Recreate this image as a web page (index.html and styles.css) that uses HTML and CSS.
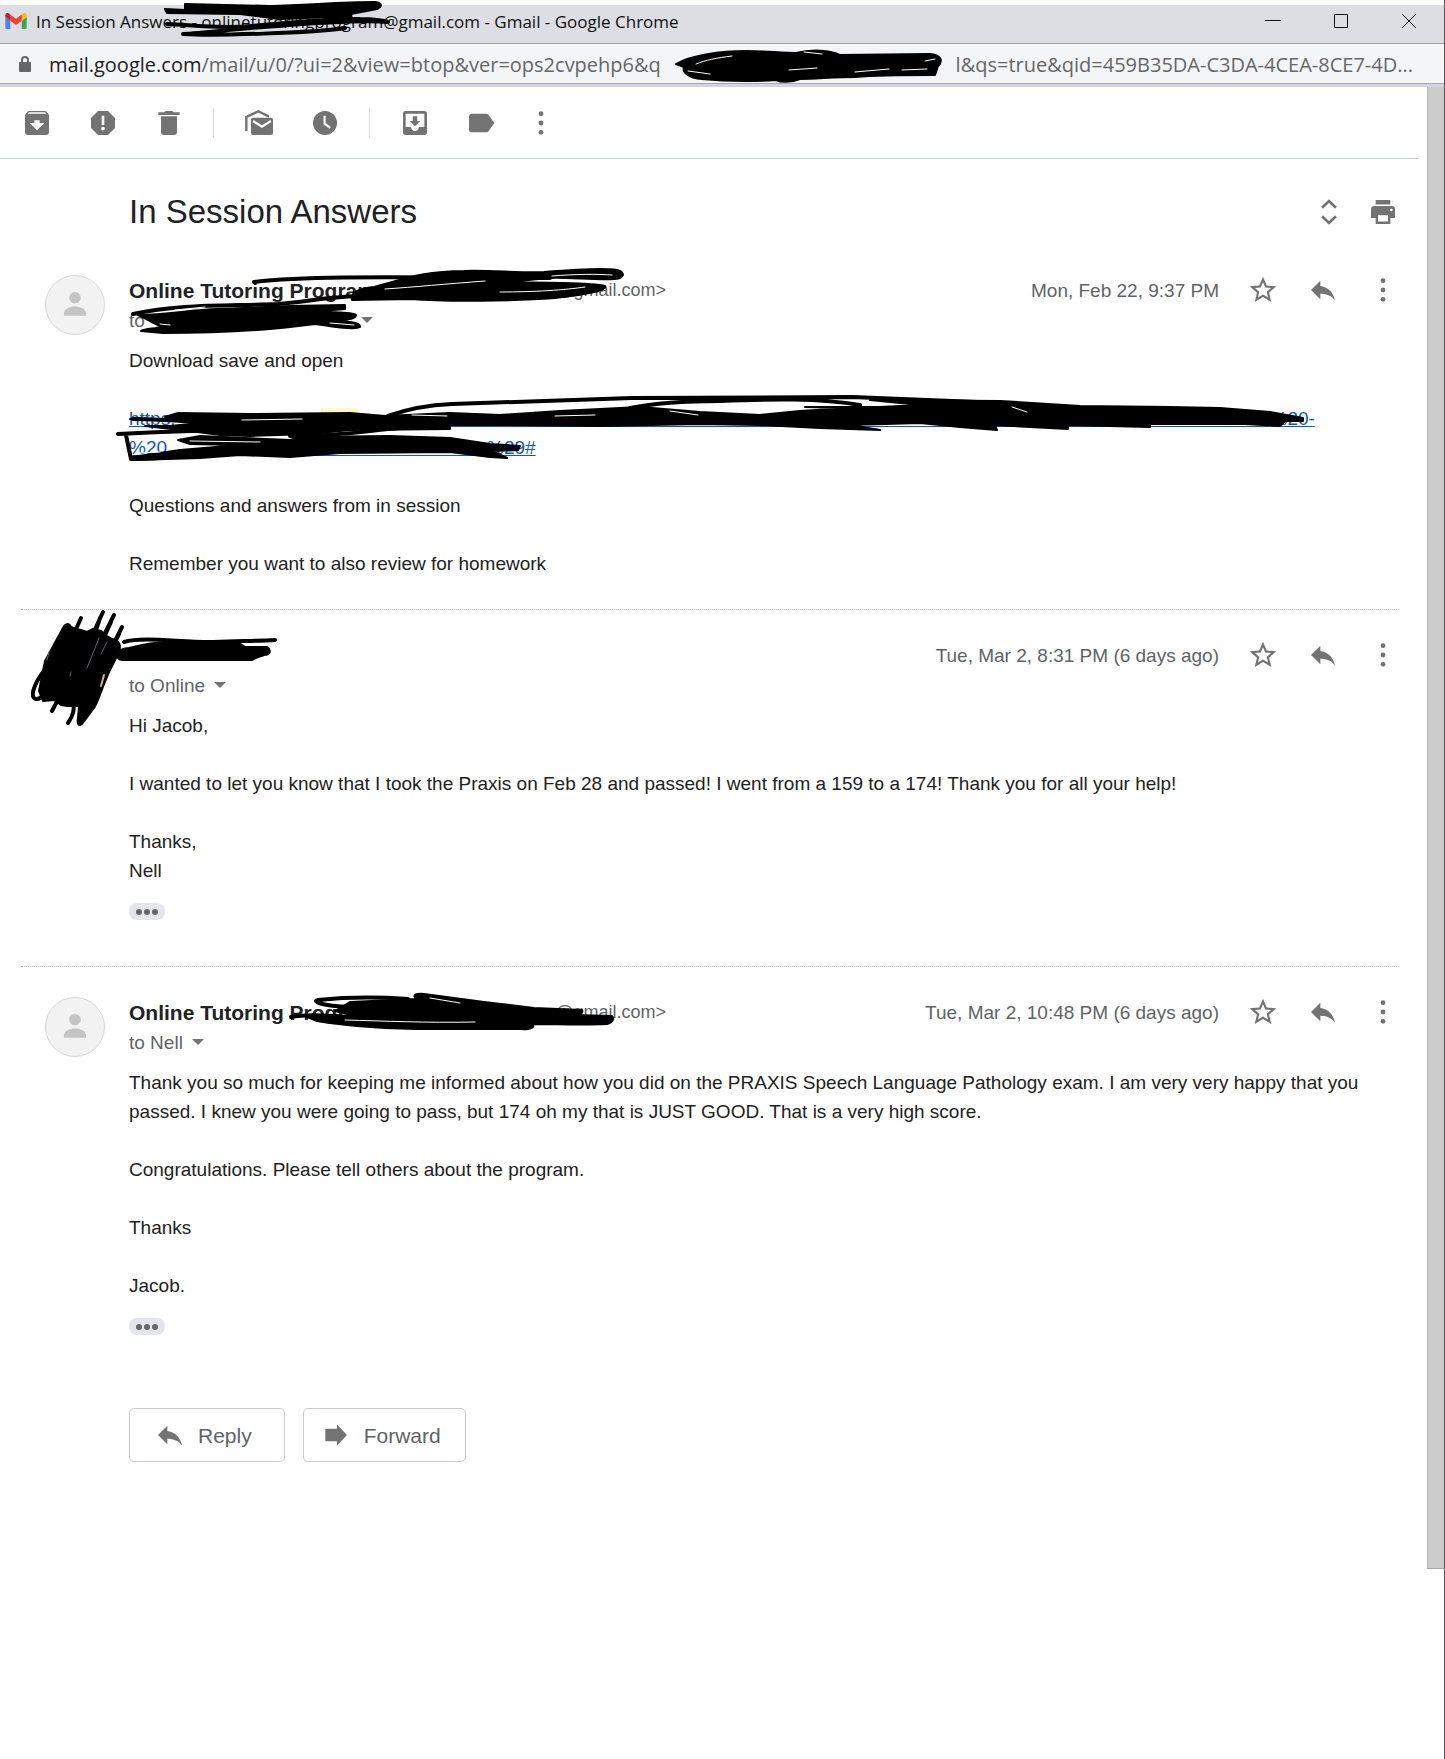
FILE: index.html
```html
<!DOCTYPE html>
<html lang="en">
<head>
    <meta charset="UTF-8">
    <meta name="viewport" content="width=device-width, initial-scale=1.0">
    <title>In Session Answers - Gmail</title>
    <link rel="stylesheet" href="styles.css">
</head>
<body>
    <!-- Icon set -->
    <svg class="icon-set" aria-hidden="true">
        <symbol id="i-archive" viewBox="0 0 24 24"><path d="M20.54 5.23l-1.39-1.68C18.88 3.21 18.47 3 18 3H6c-.47 0-.88.21-1.16.55L3.46 5.23C3.17 5.57 3 6.02 3 6.5V19c0 1.1.9 2 2 2h14c1.1 0 2-.9 2-2V6.5c0-.48-.17-.93-.46-1.27zM12 17.5L6.5 12H10v-2h4v2h3.5L12 17.5zM5.12 5l.81-1h12l.94 1H5.12z"/></symbol>
        <symbol id="i-spam" viewBox="0 0 24 24"><path d="M15.73 3H8.27L3 8.27v7.46L8.27 21h7.46L21 15.73V8.27L15.73 3zM12 17.6c-.8 0-1.4-.6-1.4-1.4s.6-1.4 1.4-1.4 1.4.6 1.4 1.4-.6 1.4-1.4 1.4zm1-4.1h-2V6.5h2v7z"/></symbol>
        <symbol id="i-delete" viewBox="0 0 24 24"><path d="M6 19c0 1.1.9 2 2 2h8c1.1 0 2-.9 2-2V7H6v12zM20 4h-4.5l-1-1h-5l-1 1H4v2h16V4z"/></symbol>
        <symbol id="i-unread" viewBox="0 0 24 24"><path d="M2.5 18V7.5L11.5 3.2l8 4" fill="none" stroke="currentColor" stroke-width="1.8"/><path d="M7.5 8H21a1.5 1.5 0 0 1 1.5 1.5v10A1.5 1.5 0 0 1 21 21H7.5A1.5 1.5 0 0 1 6 19.5v-10A1.5 1.5 0 0 1 7.5 8z"/><path d="M7.5 10.5l6.7 4.2 6.7-4.2" fill="none" stroke="#fff" stroke-width="1.7"/></symbol>
        <symbol id="i-snooze" viewBox="0 0 24 24"><circle cx="12" cy="12" r="9"/><path d="M11.7 6.5v6l4.2 3.2" fill="none" stroke="#fff" stroke-width="1.6"/></symbol>
        <symbol id="i-move" viewBox="0 0 24 24"><path d="M19 3H5a2 2 0 0 0-2 2v14a2 2 0 0 0 2 2h14a2 2 0 0 0 2-2V5a2 2 0 0 0-2-2zm0 12h-4c0 1.66-1.35 3-3 3s-3-1.34-3-3H5V5h14v10zM16 10.5h-2.3V7h-3.4v3.5H8l4 4 4-4z"/></symbol>
        <symbol id="i-label" viewBox="0 0 24 24"><path d="M17.63 5.84C17.27 5.33 16.67 5 16 5H5c-1.1 0-2 .9-2 2v10c0 1.1.9 2 2 2h11c.67 0 1.27-.33 1.63-.84L22 12l-4.37-6.16z"/></symbol>
        <symbol id="i-more" viewBox="0 0 24 24"><circle cx="12" cy="5" r="1.8"/><circle cx="12" cy="12" r="1.8"/><circle cx="12" cy="19" r="1.8"/></symbol>
        <symbol id="i-expand" viewBox="0 0 24 24"><path d="M6.8 8.8L12 3.8l5.2 5M6.8 15.2l5.2 5 5.2-5" fill="none" stroke="currentColor" stroke-width="2"/></symbol>
        <symbol id="i-print" viewBox="0 0 24 24"><path d="M6.5 3h11v3.3h-11zM18.5 7.5h-13A2.5 2.5 0 0 0 3 10v6.5h3.5V21h11v-4.5H21V10a2.5 2.5 0 0 0-2.5-2.5zM15.7 19.2H8.3v-4.7h7.4v4.7zm2.5-7.7a1 1 0 1 1 0-2 1 1 0 0 1 0 2z"/></symbol>
        <symbol id="i-star" viewBox="0 0 24 24"><path d="M22 9.24l-7.19-.62L12 2 9.19 8.63 2 9.24l5.46 4.73L5.82 21 12 17.27 18.18 21l-1.63-7.03L22 9.24zM12 15.4l-3.76 2.27 1-4.28-3.32-2.88 4.38-.38L12 6.1l1.71 4.04 4.38.38-3.32 2.88 1 4.28L12 15.4z"/></symbol>
        <symbol id="i-reply" viewBox="0 0 24 24"><path d="M10 9V5l-7 7 7 7v-4.1c5 0 8.5 1.6 11 5.1-1-5-4-10-11-11z"/></symbol>
        <symbol id="i-forward" viewBox="0 0 24 24"><path d="M4 7.3h8.7V4l7.5 8-7.5 8v-3.3H4z"/></symbol>
        <symbol id="i-person" viewBox="0 0 60 60"><circle cx="30" cy="22.5" r="6"/><path d="M18.5 41v-2c0-5 6-7.5 11.5-7.5S41.5 34 41.5 39v2z"/></symbol>
        <symbol id="i-lock" viewBox="0 0 14 18"><path d="M4 8V5a3 3 0 0 1 6 0v3" fill="none" stroke="currentColor" stroke-width="2"/><rect x="1" y="7" width="12" height="10" rx="1"/></symbol>
    </svg>

    <div class="window">
        <header class="title-bar">
            <svg class="gmail-logo" viewBox="0 0 24 18" aria-hidden="true">
                <path d="M1.6 18H5.5V8.7L0 4.6v11.8C0 17.3.7 18 1.6 18z" fill="#4285f4"/>
                <path d="M18.5 18h3.9c.9 0 1.6-.7 1.6-1.6V4.6l-5.5 4.1z" fill="#34a853"/>
                <path d="M18.5 1.6v7.1L24 4.6V2.4c0-2-2.3-3.2-3.9-2z" fill="#fbbc04"/>
                <path d="M5.5 8.7V1.6L12 6.5l6.5-4.9v7.1L12 13.6z" fill="#ea4335"/>
                <path d="M0 2.4v2.2l5.5 4.1V1.6L3.9.4C2.3-.8 0 .4 0 2.4z" fill="#c5221f"/>
            </svg>
            <span class="window-title">In Session Answers - onlinetutoringprogram@gmail.com - Gmail - Google Chrome</span>
            <div class="window-controls">
                <button type="button" aria-label="Minimize"><svg viewBox="0 0 16 16"><path d="M0 7.5h16"/></svg></button>
                <button type="button" aria-label="Maximize"><svg viewBox="0 0 16 16"><path d="M1.5 1.5h13v13h-13z"/></svg></button>
                <button type="button" aria-label="Close"><svg viewBox="0 0 16 16"><path d="M1 1l14 14M15 1L1 15"/></svg></button>
            </div>
            <svg class="ink ink-title" viewBox="160 0 240 40" aria-hidden="true">
                <path class="fill" d="M165 9l20 1V4l85 2c40-1 70-4 105-4 8 1 7 5 2 7l-26 5 1 7-22-4-50 2-40-5-73-1z"/>
                <path d="M167 24c25 1 50 5 85 2 40-4 80-8 108-7 15 0 26 2 28 3-25-2-60 0-110 4-40 2-70 7-95 8 30 2 130-1 162-6"/>
            </svg>
        </header>

        <div class="address-bar">
            <svg class="lock" aria-hidden="true"><use href="#i-lock"/></svg>
            <span class="url"><b>mail.google.com</b>/mail/u/0/?ui=2&amp;view=btop&amp;ver=ops2cvpehp6&amp;q</span>
            <span class="url url-end">l&amp;qs=true&amp;qid=459B35DA-C3DA-4CEA-8CE7-4D...</span>
            <svg class="ink ink-url" viewBox="670 46 280 38" aria-hidden="true">
                <path class="fill" d="M676 64c15-9 45-13 70-13 20 0 35 2 50 2 15-4 35-3 44 2l90-1c10 1 14 6 8 12l-3 9c-25 0-55 0-80 2-20 0-40 2-55 2-10 4-20 3-24 1-30 2-55 1-74-1-14-1-20-7-18-12z"/>
                <path class="gap" d="M696 64c10-4 20-6 36-8M688 71l22 3M789 70l28-2M855 72l34-3M902 70l25-1M925 61l10-2M804 52l18 2"/>
            </svg>
        </div>

        <div class="page">
            <main class="mail">
                <nav class="toolbar" aria-label="Message actions">
                    <button type="button" class="icon-btn" aria-label="Archive"><svg><use href="#i-archive"/></svg></button>
                    <button type="button" class="icon-btn" aria-label="Report spam"><svg><use href="#i-spam"/></svg></button>
                    <button type="button" class="icon-btn" aria-label="Delete"><svg><use href="#i-delete"/></svg></button>
                    <span class="separator"></span>
                    <button type="button" class="icon-btn" aria-label="Mark as unread"><svg><use href="#i-unread"/></svg></button>
                    <button type="button" class="icon-btn" aria-label="Snooze"><svg><use href="#i-snooze"/></svg></button>
                    <span class="separator"></span>
                    <button type="button" class="icon-btn" aria-label="Move to"><svg><use href="#i-move"/></svg></button>
                    <button type="button" class="icon-btn" aria-label="Labels"><svg><use href="#i-label"/></svg></button>
                    <button type="button" class="icon-btn narrow" aria-label="More"><svg viewBox="6 0 12 24"><use href="#i-more" width="24" height="24"/></svg></button>
                </nav>

                <div class="subject">
                    <h1>In Session Answers</h1>
                    <button type="button" class="icon-btn" aria-label="Expand all"><svg><use href="#i-expand"/></svg></button>
                    <button type="button" class="icon-btn" aria-label="Print all"><svg><use href="#i-print"/></svg></button>
                </div>

                <!-- Message 1 -->
                <article class="message">
                    <svg class="avatar" aria-hidden="true"><use href="#i-person"/></svg>
                    <div class="content">
                        <div class="message-head">
                            <strong class="sender">Online Tutoring Program</strong>
                            <span class="address">@gmail.com&gt;</span>
                            <span class="date">Mon, Feb 22, 9:37 PM</span>
                            <button type="button" class="icon-btn" aria-label="Star"><svg><use href="#i-star"/></svg></button>
                            <button type="button" class="icon-btn" aria-label="Reply"><svg><use href="#i-reply"/></svg></button>
                            <button type="button" class="icon-btn" aria-label="More"><svg><use href="#i-more"/></svg></button>
                        </div>
                        <div class="recipient">
                            <span class="hidden-names">to</span>
                            <button type="button" class="caret" aria-label="Show details"></button>
                        </div>
                        <div class="text">
                            <p>Download save and open</p>
                            <p>
                                <a href="#">https:<span class="hidden-url"></span>%20-<br>%20<span class="hidden-url short"></span>%29#</a>
                            </p>
                            <p>Questions and answers from in session</p>
                            <p>Remember you want to also review for homework</p>
                        </div>
                        <svg class="ink ink-sender" viewBox="126 266 504 68" aria-hidden="true">
                            <path d="M254 282c50-6 120-5 296-4"/>
                            <path class="fill" d="M352 300c-2-7 5-11 22-13 30-8 50-16 90-16 25-1 55 2 80 1 25-2 70-5 76-1 6 3 2 8-6 8-18 1-50-2-65-1l-50 5c40-1 95 0 106 3 4 5-30 10-50 12-40 3-110 4-142 1z"/>
                            <path class="gap" d="M552 276c25-2 45-2 60-1M385 289c30-2 60-5 100-8M500 292c35 0 65-2 85-5"/>
                            <path d="M133 314c45-10 90-8 145-10 25-2 50-7 80-8"/>
                            <path class="fill" d="M138 315c30 0 50-5 80-6l72-3 55-1v4l-35 3c20 0 45 0 46 3-1 6-15 4-25 6 15 0 30 1 29 6-5 3-25 0-45-3-50 7-100 9-152 9l-22-2c5-3 18-2 20-5-8-2-13-7-23-11z"/>
                            <path class="gap" d="M160 324l10 1M175 310l30-3M330 323l24 2"/>
                        </svg>
                        <svg class="ink ink-link" viewBox="114 394 1196 68" aria-hidden="true">
                            <path d="M321 408h37v5h-37z" class="highlight"/>
                            <path d="M388 416c22-8 40-11 64-12l180-6 220-1 150 6M630 408c30-6 60-7 90-7 50-2 100-3 140 4"/>
                            <path class="fill" d="M165 417L178 413 250 414 350 413 385 416 450 413 500 415 560 411 640 407 700 412 760 415 800 411 850 408 805 407 880 407 920 405 870 400 1000 401 1080 406 1170 407 1220 408 1270 412 1303 418 1303 421 1285 421 1280 426 1245 424 1150 424 1150 427 1068 425 1068 429 995 425 997 430 960 427 920 423 850 425 880 430 820 428 760 425 700 424 600 426 500 425 450 425 450 429 350 430 310 434 250 436 220 435 190 431 145 426 170 426 210 422 130 419 200 420z"/>
                            <path class="gap" d="M412 415l35 1M242 420l60-1M670 411l28 4M1012 407l15 5M555 416l40-1"/>
                            <path d="M118 434c60-3 110-5 180-4M133 419c40 1 60 2 90 5M126 435l5 24c60-1 100-8 150-12M290 436c60 0 80-6 110-8"/>
                            <path class="fill" d="M178 440L200 436 290 440 300 437 390 436 450 438 490 444 520 446 518 450 492 451 507 458 490 457 450 452 340 453 290 457 240 455 200 458 132 460 132 457 180 450 240 445 190 444z"/>
                            <path class="gap" d="M190 441l70 1M140 453l20-1"/>
                        </svg>
                    </div>
                </article>

                <!-- Message 2 -->
                <article class="message">
                    <span class="avatar photo"></span>
                    <div class="content">
                        <div class="message-head">
                            <span class="date">Tue, Mar 2, 8:31 PM (6 days ago)</span>
                            <button type="button" class="icon-btn" aria-label="Star"><svg><use href="#i-star"/></svg></button>
                            <button type="button" class="icon-btn" aria-label="Reply"><svg><use href="#i-reply"/></svg></button>
                            <button type="button" class="icon-btn" aria-label="More"><svg><use href="#i-more"/></svg></button>
                        </div>
                        <div class="recipient">
                            <span>to Online</span>
                            <button type="button" class="caret" aria-label="Show details"></button>
                        </div>
                        <div class="text">
                            <p>Hi Jacob,</p>
                            <p>I wanted to let you know that I took the Praxis on Feb 28 and passed! I went from a 159 to a 174! Thank you for all your help!</p>
                            <p>Thanks,<br>Nell</p>
                        </div>
                        <button type="button" class="trimmed" aria-label="Show trimmed content"><span></span><span></span><span></span></button>
                        <svg class="ink ink-photo" viewBox="28 608 256 118" aria-hidden="true">
                            <path class="fill" d="M63 628c2-5 6-5 8-1l5 2 5 1 6 2 6-3 8 2 6 5 5 3c8 1 9 7 7 13l-10 20-5 12c-4 10-6 18-10 24l-12 16c-4 3-5-1-4-6l1-12-12 0-6-1-6-5-12 1-4-10 6-30z"/>
                            <path d="M103 612l-12 26M100 618l-6 18M114 615l-14 28M111 622l-9 20M122 627l-12 24M119 634l-8 16M81 618l-8 18"/>
                            <path d="M63 690l-11 21M66 702l8-14"/>
                            <path d="M46 668c-14 18-16 30-10 31 8 1 10-12 16-12-8 14-2 12 6 0M73 698c2 12 0 18-5 25"/>
                            <path class="sheen" d="M99 638l-12 30M107 642l-6 12M49 652l-2 8M70 676l1-4"/>
                            <path class="sheen-gold" d="M104 675l-3 11"/>
                            <path d="M124 642c20-6 60 1 90 0 25-1 45-1 61-2"/>
                            <path class="fill" d="M121 653c-2-3 2-5 8-5 15-4 30-6 40-6 25 0 50 1 70 1l6 4h22c5 3 3 8-3 8-5 2-8 2-12 5l-120 0-10 0c-6-1-5-6-1-7z"/>
                        </svg>
                    </div>
                </article>

                <!-- Message 3 -->
                <article class="message">
                    <svg class="avatar" aria-hidden="true"><use href="#i-person"/></svg>
                    <div class="content">
                        <div class="message-head">
                            <strong class="sender">Online Tutoring Program</strong>
                            <span class="address">@gmail.com&gt;</span>
                            <span class="date">Tue, Mar 2, 10:48 PM (6 days ago)</span>
                            <button type="button" class="icon-btn" aria-label="Star"><svg><use href="#i-star"/></svg></button>
                            <button type="button" class="icon-btn" aria-label="Reply"><svg><use href="#i-reply"/></svg></button>
                            <button type="button" class="icon-btn" aria-label="More"><svg><use href="#i-more"/></svg></button>
                        </div>
                        <div class="recipient">
                            <span>to Nell</span>
                            <button type="button" class="caret" aria-label="Show details"></button>
                        </div>
                        <div class="text">
                            <p>Thank you so much for keeping me informed about how you did on the PRAXIS Speech Language Pathology exam. I am very very happy that you passed. I knew you were going to pass, but 174 oh my that is JUST GOOD. That is a very high score.</p>
                            <p>Congratulations. Please tell others about the program.</p>
                            <p>Thanks</p>
                            <p>Jacob.</p>
                        </div>
                        <button type="button" class="trimmed" aria-label="Show trimmed content"><span></span><span></span><span></span></button>
                        <div class="actions">
                            <button type="button"><svg><use href="#i-reply"/></svg>Reply</button>
                            <button type="button"><svg><use href="#i-forward"/></svg>Forward</button>
                        </div>
                        <svg class="ink ink-sender-2" viewBox="286 990 334 42" aria-hidden="true">
                            <path d="M291 1017c20-4 50 0 80 1M350 1007c-30-1-38-6-32-7 30-3 60-3 90-1"/>
                            <path class="fill" d="M350 1002l66-3c-4-4 0-6 8-5l60 8 50 6 48 2c2 4-5 5-10 5l40 1c3 4-1 7-5 8-25 1-50 0-75 0 5 4-5 6-10 5l-90 0c-50 0-90-4-115-8l-12-5 50 0-20-5z"/>
                            <path class="gap" d="M345 1020c40 1 80 3 130 2M430 998l30 5"/>
                        </svg>
                    </div>
                </article>
            </main>
            <div class="scrollbar"></div>
        </div>
    </div>
</body>
</html>
```
FILE: styles.css
```css
/* Global Styles */
* {
    margin: 0;
    padding: 0;
    box-sizing: border-box;
}

body {
    font-family: "Liberation Sans", Arial, sans-serif;
    font-size: 19px;
    line-height: 29px;
    background-color: #fff;
    color: #222;
}

button {
    font: inherit;
    background: none;
    border: none;
    cursor: pointer;
}

svg {
    display: block;
    fill: currentColor;
}

.icon-set {
    display: none;
}

.window {
    min-height: 100vh;
    padding-top: 5px;
    border-right: 1px solid #555;
}

/* Browser window bars */
.title-bar,
.address-bar {
    position: relative;
    display: flex;
    align-items: center;
    font-family: "Open Sans", "Noto Sans", sans-serif;
    white-space: nowrap;
}

.title-bar {
    height: 39px;
    padding: 0 14px 6px 5px;
    gap: 9px;
    background-color: #dcdee3;
    border-bottom: 1px solid #a0a0a0;
    color: #111;
    font-size: 17px;
}

.gmail-logo {
    width: 22px;
    height: 16px;
}

.window-controls {
    display: flex;
    gap: 52px;
    margin-left: auto;
    padding-right: 13px;
}

.window-controls button {
    width: 16px;
    height: 16px;
}

.window-controls svg {
    fill: none;
    stroke: #111;
}

.address-bar {
    height: 43px;
    padding: 0 31px 0 18px;
    background-color: #f4f5f7;
    border-bottom: 3px solid #d3d4df;
    box-shadow: inset 0 -1px #a4a8ac;
    color: #666;
    font-size: 20px;
}

.lock {
    width: 14px;
    height: 18px;
    margin-right: 17px;
}

.url b {
    color: #202124;
    font-weight: normal;
}

.url-end {
    margin-left: auto;
}

/* Page */
.page {
    display: flex;
}

.mail {
    flex: 1;
    min-width: 0;
    padding: 0 8px 107px 0;
}

.scrollbar {
    width: 17px;
    background-color: #cbcbcb;
    border-left: 1px solid #b4b8bc;
    border-bottom: 1px solid #a8a8a8;
}

.icon-btn {
    flex: none;
    width: 32px;
    height: 32px;
    color: #737373;
}

.icon-btn svg {
    width: 100%;
    height: 32px;
}

.narrow {
    width: 20px;
}

.toolbar {
    display: flex;
    align-items: center;
    gap: 34px;
    height: 72px;
    padding-left: 21px;
    border-bottom: 1px solid #c8d2d6;
}

.separator {
    width: 1px;
    height: 30px;
    margin: 0 -5px 0 -6px;
    background-color: #d8dde2;
}

.subject {
    display: flex;
    align-items: center;
    gap: 22px;
    padding: 33px 20px 43px 129px;
}

.subject h1 {
    flex: 1;
    font-size: 33px;
    line-height: 40px;
    font-weight: normal;
    color: #202124;
}

/* Messages */
.message {
    display: flex;
    gap: 24px;
    margin: 0 20px 0 21px;
    padding: 30px 0 46px 24px;
    border-top: 1px dotted #b9bdcf;
}

.subject + .message {
    padding: 0 0 31px 24px;
    border-top: none;
}

.avatar {
    flex: none;
    width: 60px;
    height: 60px;
    border: 1px solid #d8d8d8;
    border-radius: 50%;
    background-color: #f2f2f2;
    color: #c4c4c4;
}

.photo {
    border: none;
    background: none;
}

.content {
    position: relative;
    flex: 1;
    min-width: 0;
}

.message-head {
    display: flex;
    align-items: center;
    gap: 28px;
    height: 30px;
    color: #5f6368;
}

.sender {
    color: #202124;
    font-size: 21px;
}

.address {
    width: 262px;
    font-size: 18px;
    text-align: right;
}

.date {
    margin-left: auto;
}

.recipient {
    display: flex;
    align-items: center;
    gap: 9px;
    height: 30px;
    margin-bottom: 11px;
    color: #5f6368;
}

.hidden-names {
    width: 223px;
}

.caret {
    border: 6px solid transparent;
    border-top-color: #737373;
    border-bottom: none;
}

.text p + p {
    margin-top: 29px;
}

.text a {
    color: #15c;
}

.hidden-url {
    display: inline-block;
    width: 1095px;
    max-width: 90%;
    border-bottom: 1px solid #15c;
    vertical-align: -2px;
}

.hidden-url.short {
    width: 320px;
}

.trimmed {
    display: flex;
    align-items: center;
    justify-content: center;
    gap: 2px;
    width: 36px;
    height: 17px;
    margin-top: 18px;
    border-radius: 8px;
    background-color: #e4e5ec;
}

.trimmed span {
    width: 6px;
    height: 6px;
    border-radius: 50%;
    background-color: #666;
}

.actions {
    display: flex;
    gap: 18px;
    margin-top: 73px;
}

.actions button {
    display: flex;
    align-items: center;
    gap: 12px;
    height: 54px;
    padding: 0 32px 0 24px;
    border: 1px solid #c9ccd6;
    border-radius: 5px;
    color: #5f6368;
    font-size: 21px;
}

.actions button + button {
    padding: 0 24px 0 16px;
}

.actions svg {
    width: 32px;
    height: 32px;
    color: #737373;
}

.message:last-child {
    padding-bottom: 0;
}

/* Pen marks over private details */
.ink {
    position: absolute;
    fill: none;
    stroke: #000;
    stroke-width: 4;
    stroke-linecap: round;
    stroke-linejoin: round;
    pointer-events: none;
}

.ink .fill {
    fill: #000;
    stroke-width: 2;
}

.ink .gap {
    stroke: #fff;
    stroke-width: 1;
}

.ink .sheen {
    stroke: #667;
    stroke-width: 1;
}

.ink .sheen-gold {
    stroke: #cdbb62;
    stroke-width: 2;
}

.ink .highlight {
    fill: #fdfbc0;
    stroke: none;
}

.ink-title {
    left: 160px;
    top: -5px;
    width: 240px;
    height: 40px;
}

.ink-url {
    left: 670px;
    top: 2px;
    width: 280px;
    height: 38px;
}

.ink-sender {
    left: -3px;
    top: -9px;
    width: 504px;
    height: 68px;
}

.ink-link {
    left: -15px;
    top: 119px;
    width: 1196px;
    height: 68px;
}

.ink-photo {
    left: -101px;
    top: -32px;
    width: 256px;
    height: 118px;
}

.ink-sender-2 {
    left: 157px;
    top: -7px;
    width: 334px;
    height: 42px;
}
```
